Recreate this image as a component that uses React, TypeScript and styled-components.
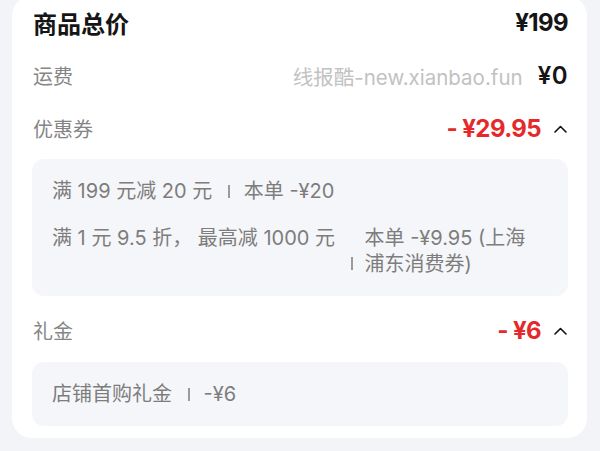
import React from "react";
import styled, { createGlobalStyle } from "styled-components";

const GlobalStyle = createGlobalStyle`
  html, body {
    margin: 0;
    padding: 0;
    background: #f3f4f7;
  }
  body {
    font-family: Inter, "Noto Sans CJK SC", sans-serif;
  }
`;

const Page = styled.div`
  width: 600px;
  height: 451px;
  overflow: hidden;
  padding: 0 13px 0 12px;
  box-sizing: border-box;
`;

const Card = styled.div`
  margin-top: -4px;
  background: #fff;
  border-radius: 20px;
  padding: 0 19px 12px 20px;
`;

const Row = styled.div`
  height: 53px;
  display: flex;
  align-items: center;
  justify-content: space-between;
`;

const Title = styled.div`
  font-size: 24px;
  font-weight: 700;
  color: #151515;
  padding-left: 1px;
`;

const Label = styled.div`
  font-size: 20px;
  color: #858585;
  padding-left: 1px;
`;

const Right = styled.div`
  display: flex;
  align-items: center;
`;

const Price = styled.div<{ $red?: boolean; $weight?: number; $spacing?: number }>`
  font-size: 24px;
  font-weight: ${(p) => p.$weight ?? 700};
  color: ${(p) => (p.$red ? "#e5292a" : "#151515")};
  letter-spacing: ${(p) => p.$spacing ?? -0.6}px;
`;

const Watermark = styled.div`
  font-size: 20.5px;
  color: #c2c2c2;
  margin-right: 15px;
`;

const Chevron = styled.svg`
  width: 13px;
  height: 8px;
  margin-left: 13px;
  margin-right: 1px;
`;

const DetailBox = styled.div<{ $mt?: number; $mb?: number }>`
  background: #f5f6f9;
  border-radius: 12px;
  padding: 19px 20px;
  margin-top: ${(p) => p.$mt ?? 0}px;
  margin-bottom: ${(p) => p.$mb ?? 0}px;
  display: flex;
  flex-direction: column;
  gap: 21px;
  font-size: 20px;
  line-height: 26px;
  color: #7d7d7d;
`;

const Line = styled.div`
  display: flex;
  align-items: flex-start;
`;

const Name = styled.span`
  white-space: nowrap;
`;

const Sep = styled.span<{ $bottom?: boolean }>`
  flex: none;
  width: 1.5px;
  height: 13px;
  background: #9a9a9a;
  margin: ${(p) => (p.$bottom ? "32px 12px 0 16px" : "7px 14px 0 16px")};
`;

const Desc = styled.span`
  flex: 1;
`;

const Up = () => (
  <Chevron viewBox="0 0 13 8">
    <polyline
      points="1,7 6.5,1.5 12,7"
      fill="none"
      stroke="#111"
      strokeWidth="1.6"
      strokeLinecap="round"
      strokeLinejoin="round"
    />
  </Chevron>
);

export default function App() {
  return (
    <>
      <GlobalStyle />
      <Page>
        <Card>
          <Row>
            <Title>商品总价</Title>
            <Price>¥199</Price>
          </Row>
          <Row>
            <Label>运费</Label>
            <Right>
              <Watermark>线报酷-new.xianbao.fun</Watermark>
              <Price $weight={600} $spacing={0.5}>¥0</Price>
            </Right>
          </Row>
          <Row>
            <Label>优惠券</Label>
            <Right>
              <Price $red>- ¥29.95</Price>
              <Up />
            </Right>
          </Row>
          <DetailBox $mt={4} $mb={8}>
            <Line>
              <Name>满 199 元减 20 元</Name>
              <Sep />
              <Desc>本单 -¥20</Desc>
            </Line>
            <Line>
              <Name>满 1 元 9.5 折， 最高减 1000 元</Name>
              <Sep $bottom />
              <Desc>
                本单 -¥9.95 (上海
                <br />
                浦东消费券)
              </Desc>
            </Line>
          </DetailBox>
          <Row>
            <Label>礼金</Label>
            <Right>
              <Price $red>- ¥6</Price>
              <Up />
            </Right>
          </Row>
          <DetailBox $mt={5}>
            <Line>
              <Name>店铺首购礼金</Name>
              <Sep />
              <Desc>-¥6</Desc>
            </Line>
          </DetailBox>
        </Card>
      </Page>
    </>
  );
}
